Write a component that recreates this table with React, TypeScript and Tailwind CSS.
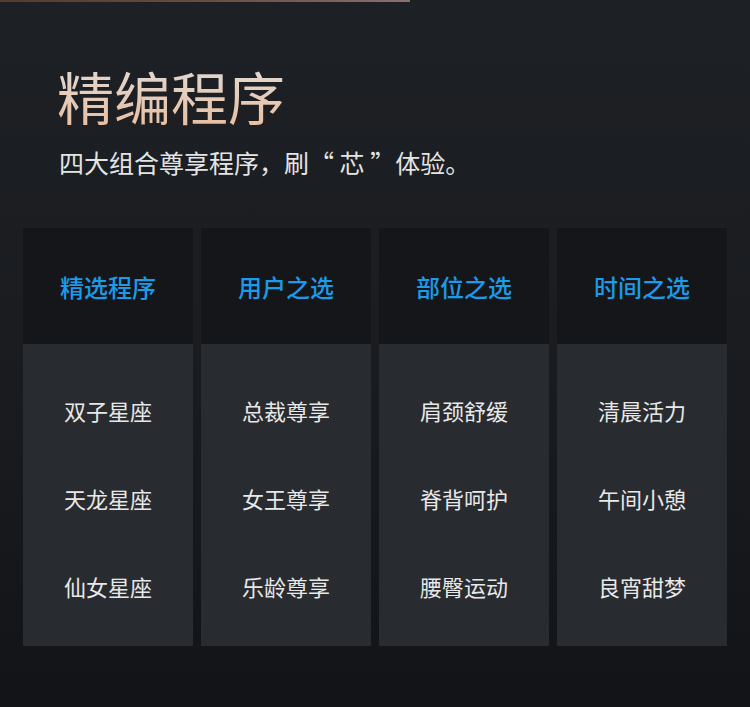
const columns = [
  { title: "精选程序", items: ["双子星座", "天龙星座", "仙女星座"] },
  { title: "用户之选", items: ["总裁尊享", "女王尊享", "乐龄尊享"] },
  { title: "部位之选", items: ["肩颈舒缓", "脊背呵护", "腰臀运动"] },
  { title: "时间之选", items: ["清晨活力", "午间小憩", "良宵甜梦"] },
];

const font = { fontFamily: '"Noto Sans CJK SC", "Noto Sans", sans-serif' };

export default function App() {
  return (
    <div
      className="relative w-[750px] h-[707px] overflow-hidden bg-gradient-to-b from-[#1d2024] via-[#1a1c20] to-[#131417]"
      style={font}
    >
      {/* top accent line */}
      <div className="absolute left-0 top-0 h-[2px] w-[410px] bg-gradient-to-r from-[#5a3a30] via-[#6b4a40] to-[#8a7070]" />

      <div className="flex flex-col px-[57px] pt-[63px]">
        <h1 className="text-[57px] leading-[64px] font-normal bg-gradient-to-b from-[#e0dad6] to-[#e8bfa0] bg-clip-text text-transparent w-fit">
          精编程序
        </h1>
        <p className="mt-[19px] text-[25px] leading-[32px] text-[#e4e4e4] pl-[2px]">
          四大组合尊享程序，刷“&nbsp;芯&nbsp;”体验。
        </p>
      </div>

      <div className="grid grid-cols-4 gap-2 px-[23px] mt-[50px]">
        {columns.map((col) => (
          <div key={col.title} className="flex flex-col">
            <div className="flex h-[116px] items-center justify-center bg-[#14161a] pt-[2px]">
              <span className="text-[24px] font-medium text-[#1b9be8]">{col.title}</span>
            </div>
            <div className="flex flex-col bg-[#282b2f] pt-[22px] pb-[16px]">
              {col.items.map((item) => (
                <div key={item} className="flex h-[88px] items-center justify-center">
                  <span className="text-[22px] text-[#e8e8e8]">{item}</span>
                </div>
              ))}
            </div>
          </div>
        ))}
      </div>
    </div>
  );
}
